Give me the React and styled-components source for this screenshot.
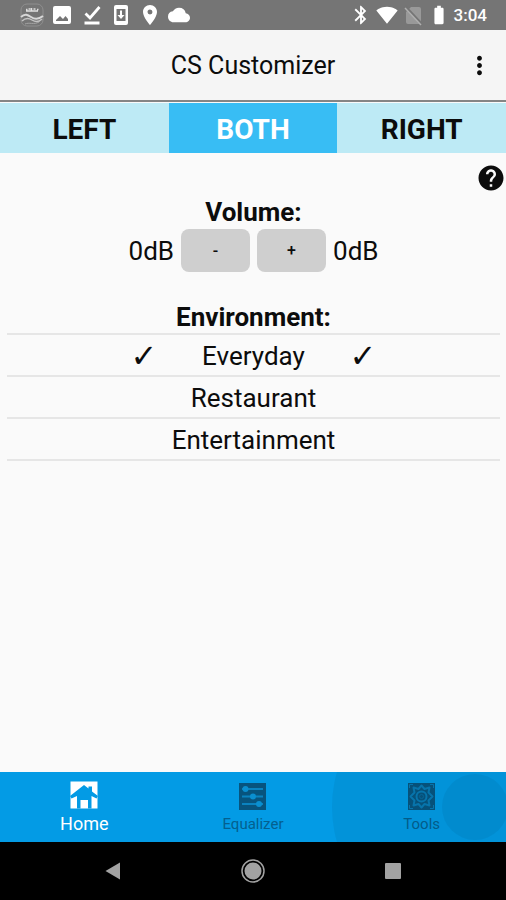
import React, { useState } from "react";
import styled, { createGlobalStyle } from "styled-components";
import {
  MdBatteryFull,
  MdBluetooth,
  MdCloud,
  MdHelp,
  MdLocationOn,
  MdMoreVert,
  MdSignalWifi4Bar,
} from "react-icons/md";

const GlobalStyle = createGlobalStyle`
  * {
    box-sizing: border-box;
  }

  body {
    margin: 0;
    background-color: #fafafa;
    color: #0c0c0c;
    font-family: Roboto, "Liberation Sans", sans-serif;
  }

  button {
    margin: 0;
    padding: 0;
    border: none;
    background: none;
    color: inherit;
    font-family: inherit;
    cursor: pointer;
  }

  svg {
    display: block;
    flex-shrink: 0;
  }
`;

const Screen = styled.div`
  display: flex;
  flex-direction: column;
  min-height: 100vh;
`;

const StatusBar = styled.div`
  display: flex;
  align-items: center;
  justify-content: space-between;
  height: 30px;
  padding: 0 19px 0 20px;
  background-color: #757575;
  color: #fff;
`;

const StatusGroup = styled.div`
  display: flex;
  align-items: center;
  gap: ${(props) => props.$gap}px;
`;

const Clock = styled.span`
  font-size: 17px;
  font-weight: 500;
  line-height: 20px;
`;

const AppBar = styled.header`
  display: grid;
  grid-template-columns: 54px 1fr 54px;
  align-items: center;
  height: 72px;
  border-bottom: 2px solid #858585;
  background-color: #f5f5f5;
`;

const Title = styled.h1`
  grid-column: 2;
  margin: 0;
  padding-top: 2px;
  font-size: 25px;
  font-weight: 400;
  line-height: 32px;
  text-align: center;
`;

const MenuButton = styled.button`
  display: flex;
  justify-content: center;
`;

const SideTabs = styled.div`
  display: grid;
  grid-template-columns: repeat(3, 1fr);
  padding-top: 1px;
`;

const SideTab = styled.button`
  height: 50px;
  padding-top: 3px;
  background-color: ${(props) => (props.$active ? "#38bdf4" : "#bdeaf5")};
  color: ${(props) => (props.$active ? "#fff" : "#0c0c0c")};
  font-size: 28px;
  font-weight: bold;
`;

const Content = styled.main`
  flex: 1;
  display: flex;
  flex-direction: column;
  padding: 10px 6px 0 7px;
`;

const HelpButton = styled.button`
  align-self: flex-end;
  margin: 0 -6px 3px 0;
`;

const Heading = styled.h2`
  margin: 0;
  font-size: 26px;
  font-weight: bold;
  line-height: 32px;
  text-align: center;
`;

const VolumeRow = styled.div`
  display: flex;
  align-items: center;
  justify-content: center;
  gap: 7px;
  margin: 1px 0 29px;
`;

const Level = styled.span`
  font-size: 26px;
  line-height: 32px;
`;

const StepButton = styled.button`
  width: 69px;
  height: 43px;
  border-radius: 8px;
  background-color: #cfcfcf;
  font-size: 16px;
  font-weight: 500;
`;

const EnvironmentList = styled.ul`
  margin: 0;
  padding: 0;
  border-top: 2px solid #e6e6e6;
  list-style: none;
`;

const EnvironmentItem = styled.li`
  border-bottom: 2px solid #e6e6e6;
`;

const EnvironmentButton = styled.button`
  display: grid;
  grid-template-columns: 51px 168px 51px;
  align-items: center;
  justify-content: center;
  width: 100%;
  height: 40px;
  padding-top: 2px;
  font-size: 26px;
  line-height: 32px;
`;

const Tick = styled.span`
  font-family: "DejaVu Sans", sans-serif;
  font-size: 32px;
`;

const BottomNav = styled.nav`
  position: relative;
  display: grid;
  grid-template-columns: repeat(3, 1fr);
  height: 70px;
  overflow: hidden;
  background-color: #039be5;
`;

const Ripple = styled.span`
  position: absolute;
  top: 50%;
  right: ${(props) => props.$right}px;
  width: ${(props) => props.$size}px;
  height: ${(props) => props.$size}px;
  border-radius: 50%;
  background-color: rgba(0, 40, 70, 0.07);
  transform: translateY(-50%);
  pointer-events: none;
`;

const NavButton = styled.button`
  display: flex;
  flex-direction: column;
  align-items: center;
  justify-content: flex-end;
  gap: ${(props) => (props.$active ? 5 : 4)}px;
  padding-bottom: 8px;
  color: ${(props) => (props.$active ? "#fff" : "#04608f")};
  font-size: ${(props) => (props.$active ? 18 : 15)}px;
  line-height: 20px;
`;

const SystemNav = styled.div`
  display: grid;
  grid-template-columns: repeat(3, 1fr);
  height: 58px;
  padding: 0 43px;
  background-color: #000;
`;

const SystemButton = styled.button`
  display: flex;
  align-items: center;
  justify-content: center;
  color: #a2a2a2;
`;

const BadgeIcon = () => (
  <svg width="24" height="24" viewBox="0 0 24 24" fill="none">
    <rect x="1" y="1" width="22" height="22" rx="6" stroke="#8f8f8f" />
    <path d="M6 6.500h1.500M8.500 6h2M11.500 5v3M13.500 6h2M17 6.500h1.500M6 8h12" stroke="#e0e0e0" strokeWidth="1.500" />
    <path d="M1 14c4-4 7-2 10 0s7 3 12-1" stroke="#d8d8d8" strokeWidth="2" />
    <path d="M2 18c4-4 7-3 10-1s6 3 10-1" stroke="#c4c4c4" strokeWidth="1.500" />
    <path d="M5 21c4-2 9 1 14-2" stroke="#a5a5a5" />
  </svg>
);

const PictureIcon = () => (
  <svg width="24" height="24" viewBox="0 0 24 24" fill="currentColor">
    <path
      fillRule="evenodd"
      d="M5 3h14a2 2 0 0 1 2 2v14a2 2 0 0 1-2 2H5a2 2 0 0 1-2-2V5a2 2 0 0 1 2-2zM6 18h12v-2l-2.500-3-2.500 3-3-3L6 17z"
    />
  </svg>
);

const DoneIcon = () => (
  <svg width="24" height="24" viewBox="0 0 24 24" fill="none" stroke="currentColor">
    <path d="M5.500 10.500l4.500 4.500L19.500 4" strokeWidth="2.800" />
    <path d="M4.500 20h15" strokeWidth="3" />
  </svg>
);

const UpdateIcon = () => (
  <svg width="22" height="24" viewBox="0 0 22 24">
    <rect x="4" y="2" width="14" height="20" rx="2" fill="#fff" />
    <path d="M6.500 6h9v12h-9z" fill="#757575" />
    <path d="M10 7.500h2V12h2.500L11 16l-3.500-4H10z" fill="#fff" />
  </svg>
);

const NoSimIcon = () => (
  <svg width="22" height="22" viewBox="0 0 22 22">
    <path d="M9 3h8a2 2 0 0 1 2 2v13a2 2 0 0 1-2 2H6a2 2 0 0 1-2-2V8z" fill="#999" />
    <path d="M3 2.500l17 18" stroke="#757575" strokeWidth="3" />
    <path d="M3 4l16 17" stroke="#b0b0b0" strokeWidth="1.500" />
  </svg>
);

const HomeIcon = () => (
  <svg width="28" height="28" viewBox="0 0 28 28">
    <path d="M.5.5h27v27H.5z" fill="#fff" />
    <path
      d="M0 15L14 4l4.500 3.500V5.500H22v5L28 15l-1.500 2.500L21.500 15v12.500H18V19h-7.500v8.500H7V15l-5.500 2.500z"
      fill="#039be5"
    />
  </svg>
);

const EqualizerIcon = () => (
  <svg width="27" height="27" viewBox="0 0 27 27">
    <path d="M0 0h27v27H0z" fill="#07547e" />
    <path d="M3 6h21M3 13.500h21M3 21h21" stroke="#0a83c0" strokeWidth="2" />
    <circle cx="6.500" cy="6" r="3" fill="#0a8fd0" />
    <circle cx="14" cy="13.500" r="3" fill="#0a8fd0" />
    <circle cx="20" cy="21" r="3" fill="#0a8fd0" />
  </svg>
);

const ToolsIcon = () => (
  <svg width="27" height="27" viewBox="0 0 27 27" fill="none">
    <path d="M0 0h27v27H0z" fill="#07547e" />
    <path
      d="M13.500 2.500l3 3.500 5-1.500-1 5 4 4-4 4 1 5-5-1.500-3 3.500-3-3.500-5 1.500 1-5-4-4 4-4-1-5 5 1.500z"
      stroke="#087ab3"
      strokeWidth="2"
      strokeLinejoin="round"
    />
    <circle cx="13.500" cy="13.500" r="5" stroke="#087ab3" strokeWidth="2" />
    <circle cx="13.500" cy="13.500" r="2" stroke="#066a9d" />
    <path d="M1.500 5V1.500H5M22 1.500h3.500V5M1.500 22v3.500H5M22 25.500h3.500V22" stroke="#087ab3" />
  </svg>
);

const BackIcon = () => (
  <svg width="16" height="20" viewBox="0 0 16 20" fill="currentColor">
    <path d="M15 1.500v17L.5 10z" />
  </svg>
);

const CircleIcon = () => (
  <svg width="26" height="26" viewBox="0 0 26 26">
    <circle cx="13" cy="13" r="11" fill="none" stroke="currentColor" strokeWidth="1.500" />
    <circle cx="13" cy="13" r="8.500" fill="currentColor" />
  </svg>
);

const SquareIcon = () => (
  <svg width="16" height="16" viewBox="0 0 16 16" fill="currentColor">
    <rect width="16" height="16" rx="1" />
  </svg>
);

const sides = ["LEFT", "BOTH", "RIGHT"];
const environments = ["Everyday", "Restaurant", "Entertainment"];
const pages = [
  { name: "Home", Icon: HomeIcon },
  { name: "Equalizer", Icon: EqualizerIcon },
  { name: "Tools", Icon: ToolsIcon },
];

const App = () => {
  const [side, setSide] = useState("BOTH");
  const [volume, setVolume] = useState({ left: 0, right: 0 });
  const [environment, setEnvironment] = useState("Everyday");
  const [page, setPage] = useState("Home");

  const changeVolume = (step) => {
    setVolume({
      left: side === "RIGHT" ? volume.left : volume.left + step,
      right: side === "LEFT" ? volume.right : volume.right + step,
    });
  };

  return (
    <Screen>
      <GlobalStyle />
      <StatusBar>
        <StatusGroup $gap={6}>
          <BadgeIcon />
          <PictureIcon />
          <DoneIcon />
          <UpdateIcon />
          <MdLocationOn size={24} />
          <MdCloud size={22} />
        </StatusGroup>
        <StatusGroup $gap={4}>
          <MdBluetooth size={22} />
          <MdSignalWifi4Bar size={22} />
          <NoSimIcon />
          <MdBatteryFull size={22} />
          <Clock>3:04</Clock>
        </StatusGroup>
      </StatusBar>

      <AppBar>
        <Title>CS Customizer</Title>
        <MenuButton aria-label="More options">
          <MdMoreVert size={29} />
        </MenuButton>
      </AppBar>

      <SideTabs>
        {sides.map((name) => (
          <SideTab
            key={name}
            $active={name === side}
            aria-pressed={name === side}
            onClick={() => setSide(name)}
          >
            {name}
          </SideTab>
        ))}
      </SideTabs>

      <Content>
        <HelpButton aria-label="Help">
          <MdHelp size={30} />
        </HelpButton>
        <Heading>Volume:</Heading>
        <VolumeRow>
          <Level>{volume.left}dB</Level>
          <StepButton onClick={() => changeVolume(-1)}>-</StepButton>
          <StepButton onClick={() => changeVolume(1)}>+</StepButton>
          <Level>{volume.right}dB</Level>
        </VolumeRow>
        <Heading>Environment:</Heading>
        <EnvironmentList>
          {environments.map((name) => (
            <EnvironmentItem key={name}>
              <EnvironmentButton
                aria-pressed={name === environment}
                onClick={() => setEnvironment(name)}
              >
                <Tick>{name === environment && "✓"}</Tick>
                <span>{name}</span>
                <Tick>{name === environment && "✓"}</Tick>
              </EnvironmentButton>
            </EnvironmentItem>
          ))}
        </EnvironmentList>
      </Content>

      <BottomNav>
        <Ripple $size={250} $right={-76} />
        <Ripple $size={66} $right={-2} />
        {pages.map(({ name, Icon }) => (
          <NavButton key={name} $active={name === page} onClick={() => setPage(name)}>
            <Icon />
            {name}
          </NavButton>
        ))}
      </BottomNav>

      <SystemNav>
        <SystemButton aria-label="Back">
          <BackIcon />
        </SystemButton>
        <SystemButton aria-label="Home screen">
          <CircleIcon />
        </SystemButton>
        <SystemButton aria-label="Recent apps">
          <SquareIcon />
        </SystemButton>
      </SystemNav>
    </Screen>
  );
};

export default App;
